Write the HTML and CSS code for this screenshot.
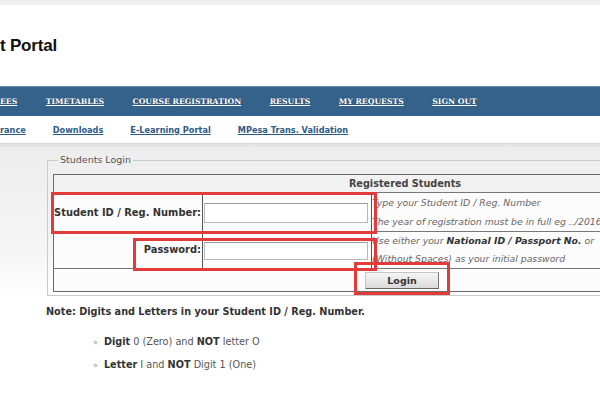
FILE: index.html
```html
<!DOCTYPE html>
<html lang="en">
<head>
<meta charset="utf-8">
<title>Student Portal</title>
<link rel="stylesheet" href="styles.css">
</head>
<body>
<div class="page">
  <div class="topstrip"></div>
  <header class="header">
    <h1 class="title">t Portal</h1>
  </header>
  <nav class="nav">
    <a href="#">EES</a>
    <a href="#">TIMETABLES</a>
    <a href="#">COURSE REGISTRATION</a>
    <a href="#">RESULTS</a>
    <a href="#">MY REQUESTS</a>
    <a href="#">SIGN OUT</a>
  </nav>
  <nav class="subnav">
    <a href="#">rance</a>
    <a href="#">Downloads</a>
    <a href="#">E-Learning Portal</a>
    <a href="#">MPesa Trans. Validation</a>
  </nav>
  <div class="sep"></div>
  <main class="content">
    <fieldset class="box">
      <legend>Students Login</legend>
      <table class="login">
        <tr class="rh"><th colspan="3">Registered Students</th></tr>
        <tr class="r1">
          <td class="label">Student ID / Reg. Number:</td>
          <td class="field"><input class="inp tall" type="text"></td>
          <td class="hint h1">Type your Student ID / Reg. Number<br>The year of registration must be in full eg ../2016</td>
        </tr>
        <tr class="r2">
          <td class="label">Password:</td>
          <td class="field"><input class="inp short" type="password"></td>
          <td class="hint h2">Use either your <b>National ID / Passport No.</b> or<br>(Without Spaces) as your initial password</td>
        </tr>
        <tr class="r3">
          <td colspan="3" class="btncell"><button class="btn" type="button">Login</button></td>
        </tr>
      </table>
    </fieldset>
    <p class="note">Note: Digits and Letters in your Student ID / Reg. Number.</p>
    <ul class="rules">
      <li><span class="raquo">»</span><b>Digit</b> 0 (Zero) and <b>NOT</b> letter O</li>
      <li><span class="raquo">»</span><b>Letter</b> I and <b>NOT</b> Digit 1 (One)</li>
    </ul>
  </main>
  <div class="mark m1"></div>
  <div class="mark m2"></div>
  <div class="mark m3"></div>
</div>
</body>
</html>
```
FILE: styles.css
```css
html, body {
  margin: 0;
  padding: 0;
  overflow: hidden;
  background: #fff;
}
body {
  font-family: "DejaVu Sans", Verdana, sans-serif;
  font-size: 9.7px;
  color: #333;
}
.page {
  position: relative;
  width: 600px;
  height: 400px;
  overflow: hidden;
}
.topstrip {
  height: 5px;
  background: #efefef;
}
.header {
  height: 81px;
  box-sizing: border-box;
  padding-top: 31px;
}
.title {
  margin: 0;
  font-family: "Liberation Sans", Arial, sans-serif;
  font-size: 17px;
  line-height: 20px;
  font-weight: bold;
  color: #111;
  letter-spacing: -0.2px;
}
.nav {
  height: 30px;
  background: #35628b;
  display: flex;
  align-items: center;
  gap: 28.5px;
  white-space: nowrap;
  border-top: 1px solid #6d8fad;
  box-sizing: border-box;
}
.nav a {
  font-family: "DejaVu Serif", Georgia, serif;
  font-weight: bold;
  font-size: 7.7px;
  color: #fff;
  text-decoration: underline;
  text-shadow: 0 0 1px #1c3b58;
}
.subnav {
  height: 27px;
  display: flex;
  align-items: center;
  gap: 27px;
  white-space: nowrap;
  background: #fff;
}
.subnav a {
  font-weight: bold;
  font-size: 8.2px;
  color: #2f5b86;
  text-decoration: underline;
}
.sep {
  height: 4px;
  background: #e4e4e4;
  border-top: 1px dotted #cfcfcf;
  box-sizing: border-box;
}
.content {
  padding: 7px 0 0 47px;
  background: linear-gradient(#ededed, #f6f6f6 110px, #fff 150px);
  height: 260px;
  box-sizing: border-box;
}
.box {
  margin: 0;
  width: 760px;
  box-sizing: border-box;
  border: 1px solid #cacaca;
  padding: 8px 5px 3px 5px;
}
.box legend {
  font-size: 9.5px;
  line-height: 12px;
  color: #555;
  padding: 0 2px;
  margin-left: 5px;
}
.login {
  width: 704px;
  border-collapse: collapse;
  border: 1px solid #6a6a6a;
  background: #fcfcfc;
}
.login td, .login th {
  padding: 0;
  white-space: nowrap;
}
.rh th {
  height: 17px;
  font-weight: bold;
  text-align: center;
  color: #444;
  background: #f1f1f1;
  border-bottom: 1px solid #777;
}
.r1 td { height: 38px; }
.r2 td { height: 36px; }
.label {
  width: 147px;
  text-align: right;
  font-weight: bold;
  font-size: 9.9px;
  color: #333;
  padding-right: 1px !important;
  border-right: 1px solid #555;
}
.field {
  width: 167px;
  padding-left: 1px !important;
  border-right: 1px solid #555;
}
.inp {
  display: block;
  width: 164px;
  box-sizing: border-box;
  margin: 0;
  border: 1px solid #b8b8b8;
  border-top-color: #9a9a9a;
  background: #fff;
  padding: 0;
}
.tall { height: 20px; margin-top: 2px; }
.short { height: 18px; margin-top: 2px; }
.hint {
  font-style: italic;
  font-size: 9.3px;
  color: #666;
  vertical-align: middle;
}
.h1 {
  line-height: 19px;
  border-bottom: 1px solid #777;
}
.h2 { line-height: 18px; }
.hint b { color: #333; }
.r3 td {
  height: 22px;
  border-top: 1px solid #777;
}
.btncell {
  padding-left: 311px !important;
  vertical-align: middle;
}
.btn {
  display: block;
  width: 74px;
  height: 17px;
  padding: 0;
  font-family: inherit;
  font-size: 9.5px;
  font-weight: bold;
  color: #333;
  background: linear-gradient(#f5f5f5, #dadada);
  border: 1px solid #c4c4c4;
  border-right-color: #777;
  border-bottom-color: #666;
}
.note {
  margin: 9px 0 0 -1px;
  font-weight: bold;
  line-height: 14px;
  color: #333;
}
.rules {
  list-style: none;
  margin: 16px 0 0 46px;
  padding: 0;
  color: #555;
}
.rules li {
  line-height: 14px;
  margin-bottom: 8px;
}
.rules b { color: #333; }
.raquo {
  color: #999;
  font-size: 8px;
  margin-right: 6px;
}
.mark {
  position: absolute;
  border: 3px solid #e23b3b;
  box-sizing: border-box;
}
.m1 { left: 51px; top: 192px; width: 326px; height: 42px; }
.m2 { left: 133px; top: 238px; width: 244px; height: 33px; }
.m3 { left: 354px; top: 262px; width: 96px; height: 33px; }
```
